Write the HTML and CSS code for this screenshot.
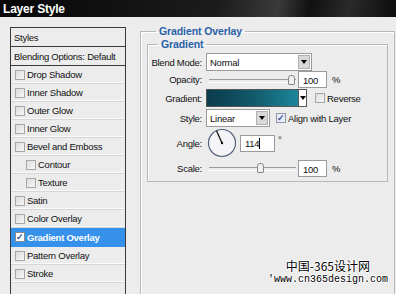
FILE: index.html
```html
<!DOCTYPE html>
<html lang="en">
<head>
  <meta charset="UTF-8">
  <title>Layer Style</title>
  <link rel="stylesheet" href="styles.css">
</head>
<body>

  <div class="window">
    <div class="titlebar">Layer Style</div>

    <div class="content">
      <div class="styles-list">
        <div class="item head">Styles</div>
        <div class="item head">Blending Options: Default</div>
        <div class="item"><span class="box"></span>Drop Shadow</div>
        <div class="item"><span class="box"></span>Inner Shadow</div>
        <div class="item"><span class="box"></span>Outer Glow</div>
        <div class="item"><span class="box"></span>Inner Glow</div>
        <div class="item"><span class="box"></span>Bevel and Emboss</div>
        <div class="item sub"><span class="box"></span>Contour</div>
        <div class="item sub"><span class="box"></span>Texture</div>
        <div class="item"><span class="box"></span>Satin</div>
        <div class="item"><span class="box"></span>Color Overlay</div>
        <div class="item selected"><span class="box checked">&#10003;</span>Gradient Overlay</div>
        <div class="item"><span class="box"></span>Pattern Overlay</div>
        <div class="item"><span class="box"></span>Stroke</div>
        <div class="item"></div>
      </div>

      <fieldset class="panel">
        <legend>Gradient Overlay</legend>
        <fieldset class="group">
          <legend>Gradient</legend>

          <div class="row blend-row">
            <label>Blend Mode:</label>
            <div class="select wide">Normal<span class="arrow"></span></div>
          </div>

          <div class="row opacity-row">
            <label>Opacity:</label>
            <div class="slider"><span class="thumb" style="left: 79px"></span></div>
            <div class="field">100</div>
            <span class="unit">%</span>
          </div>

          <div class="row gradient-row">
            <label>Gradient:</label>
            <div class="swatch"><span class="arrow"></span></div>
            <span class="box"></span>
            <span>Reverse</span>
          </div>

          <div class="row">
            <label>Style:</label>
            <div class="select narrow">Linear<span class="arrow"></span></div>
            <span class="box checked blue">&#10003;</span>
            <span>Align with Layer</span>
          </div>

          <div class="row angle-row">
            <label>Angle:</label>
            <svg class="dial" width="30" height="30" viewBox="0 0 30 30">
              <circle cx="15" cy="15" r="13.5" fill="#f4f4f6" stroke="#55607a" stroke-width="1.2"/>
              <line x1="15" y1="15" x2="9.5" y2="2.8" stroke="#111" stroke-width="1.3"/>
              <circle cx="15" cy="15" r="1.2" fill="#111"/>
            </svg>
            <div class="field angle">114<span class="caret"></span></div>
            <span class="unit deg">&deg;</span>
          </div>

          <div class="row">
            <label>Scale:</label>
            <div class="slider"><span class="thumb" style="left: 48px"></span></div>
            <div class="field">100</div>
            <span class="unit">%</span>
          </div>
        </fieldset>
      </fieldset>
    </div>

    <div class="watermark">
      <div class="wm-cn">中国-365设计网</div>
      <div class="wm-url">'www.cn365design.com</div>
    </div>
  </div>

</body>
</html>
```

FILE: styles.css
```css
* {
  box-sizing: border-box;
}

body {
  margin: 0;
  background: #ececec;
  font-family: 'Liberation Sans', Arial, sans-serif;
  font-size: 9.5px;
  letter-spacing: -0.25px;
  color: #111;
}

.window {
  position: relative;
  width: 396px;
  height: 294px;
  overflow: hidden;
  background: #ececec;
}

.titlebar {
  height: 17px;
  padding: 2px 0 0 3px;
  background: linear-gradient(100deg, #060606 0%, #1c1c1c 55%, #3a3a3a 70%, #111 78%, #2a2a2a 88%, #0c0c0c 100%);
  color: #fff;
  font-weight: bold;
  font-size: 12px;
  letter-spacing: -0.2px;
}

.content {
  display: flex;
  align-items: flex-start;
  padding: 10px 0 0 10px;
}

/* left list */

.styles-list {
  width: 116px;
  border: 1px solid #3a3a3a;
  background: #ececec;
  flex-shrink: 0;
}

.item {
  display: flex;
  align-items: center;
  height: 18px;
  padding-left: 4px;
  border-bottom: 1px solid #d6d6d6;
  box-shadow: inset 0 -1px 0 #fafafa;
  white-space: nowrap;
}

.item.head {
  height: 19px;
  padding-left: 3px;
  border-bottom: 1px solid #3a3a3a;
  box-shadow: none;
}

.item.sub {
  padding-left: 15px;
}

.item.selected {
  height: 19px;
  background: #3591ea;
  color: #fff;
  font-weight: bold;
  box-shadow: none;
  border-bottom-color: #3591ea;
}

.box {
  display: inline-flex;
  align-items: center;
  justify-content: center;
  width: 10px;
  height: 10px;
  margin-right: 2px;
  border: 1px solid #a7a7a7;
  background: linear-gradient(135deg, #dcdcdc, #f8f8f8);
  flex-shrink: 0;
  font-size: 9px;
  font-weight: bold;
  line-height: 1;
}

.box.checked {
  background: #fff;
  color: #2a4f8f;
  border-color: #8a8a8a;
}

.box.blue {
  background: #e9edf7;
  border-color: #8f96aa;
  color: #3b4f9a;
}

/* right panel */

.panel {
  margin: -2px 0 0 14px;
  padding: 1px 6px 0 6px;
  width: 255px;
  height: 300px;
  border: 1px solid #b8b8b8;
  box-shadow: inset 1px 1px 0 #fff;
}

legend {
  padding: 0 3px;
  margin-left: 9px;
  color: #2860a8;
  font-weight: bold;
  font-size: 10.5px;
  letter-spacing: -0.1px;
}

.group {
  margin: 0;
  padding: 3px 0 3px 0;
  border: 1px solid #b8b8b8;
  box-shadow: inset 1px 1px 0 #fff;
}

.group legend {
  margin-left: 10px;
}

.row {
  display: flex;
  align-items: center;
  height: 18px;
  margin-bottom: 1px;
  white-space: nowrap;
}

.blend-row {
  margin-bottom: 0;
}

.opacity-row {
  height: 17px;
}

.gradient-row {
  margin-bottom: 2px;
}

.row label {
  width: 54px;
  margin-right: 4px;
  text-align: right;
}

.select {
  position: relative;
  height: 18px;
  padding: 3px 0 0 3px;
  background: #fff;
  border: 1px solid #9a9a9a;
}

.select.wide {
  width: 106px;
}

.select.narrow {
  width: 64px;
  margin-right: 6px;
}

.arrow {
  position: absolute;
  top: 1px;
  right: 1px;
  width: 12px;
  height: 14px;
  background: #d8d8d8;
  border: 1px solid #b0b0b0;
}

.arrow::after {
  content: '';
  position: absolute;
  left: 2px;
  top: 4px;
  border-left: 3px solid transparent;
  border-right: 3px solid transparent;
  border-top: 4px solid #000;
}

.slider {
  position: relative;
  width: 87px;
  height: 16px;
  margin: 0 2px 0 3px;
}

.slider::before {
  content: '';
  position: absolute;
  left: 0;
  right: 0;
  top: 7px;
  height: 2px;
  border-top: 1px solid #9a9a9a;
  border-bottom: 1px solid #fff;
}

.thumb {
  position: absolute;
  top: 3px;
  width: 7px;
  height: 10px;
  border: 1px solid #8a8a8a;
  border-radius: 3px 3px 1px 1px;
  background: #f0f0f0;
}

.field {
  width: 29px;
  height: 17px;
  padding: 3px 0 0 4px;
  background: #fff;
  border: 1px solid #9a9a9a;
}

.unit {
  margin-left: 5px;
}

.swatch {
  position: relative;
  width: 101px;
  height: 18px;
  margin-right: 8px;
  border: 1px solid #555;
  background: linear-gradient(90deg, #0a3b4c 0%, #125868 45%, #1d8ea4 100%);
}

.swatch .arrow {
  top: 0;
  right: 0;
  width: 8px;
  height: 16px;
  background: #fff;
  border: none;
  border-left: 1px solid #555;
}

.swatch .arrow::after {
  left: 1px;
  top: 6px;
}

.angle-row {
  height: 30px;
}

.dial {
  margin: 0 3px 0 1px;
}

.field.angle {
  width: 35px;
  display: flex;
  align-items: center;
  padding-top: 0;
}

.caret {
  width: 1px;
  height: 11px;
  background: #000;
}

.deg {
  align-self: flex-start;
  margin: 6px 0 0 3px;
  color: #111;
}

/* watermark over the bottom right corner */

.watermark {
  position: absolute;
  right: 8px;
  bottom: 8px;
  text-align: right;
  color: #000;
  letter-spacing: 0;
  text-shadow: 1px 0 #fff, -1px 0 #fff, 0 1px #fff, 0 -1px #fff;
}

.wm-cn {
  font-family: 'Noto Sans CJK SC', sans-serif;
  font-size: 12px;
  line-height: 16px;
  margin-right: 18px;
}

.wm-url {
  font-family: 'Liberation Mono', monospace;
  font-size: 10px;
  line-height: 12px;
}
```
